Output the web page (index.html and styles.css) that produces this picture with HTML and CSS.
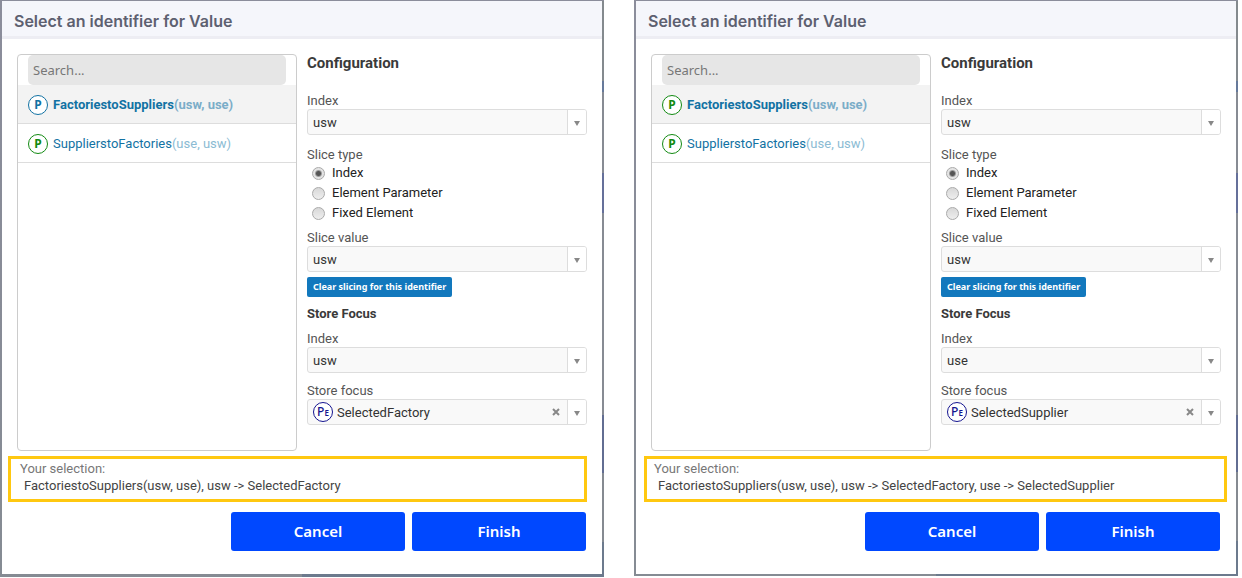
FILE: index.html
```html
<!DOCTYPE html>
<html lang="en">
<head>
<meta charset="utf-8">
<title>Select an identifier for Value</title>
<link rel="stylesheet" href="styles.css">
</head>
<body>
<main class="page">
  <section class="dialog dialog-factory" aria-labelledby="title-a">
    <header class="dialog-header"><h1 class="dialog-title" id="title-a">Select an identifier for Value</h1></header>
    <div class="dialog-body">
      <div class="picker">
        <input class="search" type="text" placeholder="Search..." aria-label="Search identifiers">
        <ul class="identifiers">
          <li class="identifier selected"><span class="badge badge-blue">P</span><a class="name" href="#a1">FactoriestoSuppliers<span class="indices">(usw, use)</span></a></li>
          <li class="identifier"><span class="badge badge-green">P</span><a class="name" href="#a2">SupplierstoFactories<span class="indices">(use, usw)</span></a></li>
        </ul>
      </div>
      <form class="config">
        <h2 class="config-title">Configuration</h2>
        <div class="field">
          <label class="label" for="index-a">Index</label>
          <div class="combo"><select class="combo-select" id="index-a"><option>usw</option></select><span class="combo-arrow"></span></div>
        </div>
        <fieldset class="slice">
          <legend class="label">Slice type</legend>
          <label class="choice"><input class="radio" type="radio" name="slice-a" checked>Index</label>
          <label class="choice"><input class="radio" type="radio" name="slice-a">Element Parameter</label>
          <label class="choice"><input class="radio" type="radio" name="slice-a">Fixed Element</label>
        </fieldset>
        <div class="field">
          <label class="label" for="value-a">Slice value</label>
          <div class="combo"><select class="combo-select" id="value-a"><option>usw</option></select><span class="combo-arrow"></span></div>
        </div>
        <button class="clear-slicing" type="button">Clear slicing for this identifier</button>
        <h3 class="focus-title">Store Focus</h3>
        <div class="field">
          <label class="label" for="focus-index-a">Index</label>
          <div class="combo"><select class="combo-select" id="focus-index-a"><option>usw</option></select><span class="combo-arrow"></span></div>
        </div>
        <div class="field focus-field">
          <label class="label" for="focus-a">Store focus</label>
          <div class="combo combo-tagged">
            <select class="combo-select" id="focus-a"><option>SelectedFactory</option></select>
            <span class="badge badge-element">P<small class="badge-sub">E</small></span>
            <button class="combo-clear" type="button" aria-label="Clear store focus"><svg class="cross" viewBox="0 0 8 8"><path d="M1 1l6 6M7 1l-6 6"/></svg></button>
            <span class="combo-arrow"></span>
          </div>
        </div>
      </form>
    </div>
    <div class="summary">
      <p class="summary-label">Your selection:</p>
      <p class="summary-value">FactoriestoSuppliers(usw, use), usw -&gt; SelectedFactory</p>
    </div>
    <footer class="actions"><button class="action" type="button">Cancel</button><button class="action" type="button">Finish</button></footer>
  </section>

  <section class="dialog dialog-supplier" aria-labelledby="title-b">
    <header class="dialog-header"><h1 class="dialog-title" id="title-b">Select an identifier for Value</h1></header>
    <div class="dialog-body">
      <div class="picker">
        <input class="search" type="text" placeholder="Search..." aria-label="Search identifiers">
        <ul class="identifiers">
          <li class="identifier selected"><span class="badge badge-green">P</span><a class="name" href="#b1">FactoriestoSuppliers<span class="indices">(usw, use)</span></a></li>
          <li class="identifier"><span class="badge badge-green">P</span><a class="name" href="#b2">SupplierstoFactories<span class="indices">(use, usw)</span></a></li>
        </ul>
      </div>
      <form class="config">
        <h2 class="config-title">Configuration</h2>
        <div class="field">
          <label class="label" for="index-b">Index</label>
          <div class="combo"><select class="combo-select" id="index-b"><option>usw</option></select><span class="combo-arrow"></span></div>
        </div>
        <fieldset class="slice">
          <legend class="label">Slice type</legend>
          <label class="choice"><input class="radio" type="radio" name="slice-b" checked>Index</label>
          <label class="choice"><input class="radio" type="radio" name="slice-b">Element Parameter</label>
          <label class="choice"><input class="radio" type="radio" name="slice-b">Fixed Element</label>
        </fieldset>
        <div class="field">
          <label class="label" for="value-b">Slice value</label>
          <div class="combo"><select class="combo-select" id="value-b"><option>usw</option></select><span class="combo-arrow"></span></div>
        </div>
        <button class="clear-slicing" type="button">Clear slicing for this identifier</button>
        <h3 class="focus-title">Store Focus</h3>
        <div class="field">
          <label class="label" for="focus-index-b">Index</label>
          <div class="combo"><select class="combo-select" id="focus-index-b"><option>use</option></select><span class="combo-arrow"></span></div>
        </div>
        <div class="field focus-field">
          <label class="label" for="focus-b">Store focus</label>
          <div class="combo combo-tagged">
            <select class="combo-select" id="focus-b"><option>SelectedSupplier</option></select>
            <span class="badge badge-element">P<small class="badge-sub">E</small></span>
            <button class="combo-clear" type="button" aria-label="Clear store focus"><svg class="cross" viewBox="0 0 8 8"><path d="M1 1l6 6M7 1l-6 6"/></svg></button>
            <span class="combo-arrow"></span>
          </div>
        </div>
      </form>
    </div>
    <div class="summary">
      <p class="summary-label">Your selection:</p>
      <p class="summary-value">FactoriestoSuppliers(usw, use), usw -&gt; SelectedFactory, use -&gt; SelectedSupplier</p>
    </div>
    <footer class="actions"><button class="action" type="button">Cancel</button><button class="action" type="button">Finish</button></footer>
  </section>
</main>
</body>
</html>
```
FILE: styles.css
```css
*, *::before, *::after { box-sizing: border-box; }

body {
  margin: 0;
  background: #fff;
  color: #3a3a3a;
  font: 13px/18px Roboto, sans-serif;
}

h1, h2, h3, p, ul { margin: 0; padding: 0; }

.page {
  display: flex;
  align-items: flex-start;
  gap: 30px;
  padding-right: 4px;
}

.dialog {
  flex: 1;
  min-width: 0;
  border: 2px solid transparent;
  border-top: 1px solid transparent;
  background:
    linear-gradient(#fff, #fff) padding-box,
    linear-gradient(#8b8d9b, #858b93) left / 50% 100% no-repeat border-box,
    linear-gradient(#8b8d9b 0 1px, #848a8e 1px 14%, #66799a 14% 16%, #878b93 16% 30%, #65709a 30% 37%, #878b93 37% 72%, #626d92 72% 82%, #858a91 82% 94%, #6c7a8d 94%) right / 50% 100% no-repeat border-box;
}
.dialog-factory { border-bottom-width: 3px; }

.dialog-header {
  padding: 11px 12px 6px;
  border-bottom: 3px solid #ededf3;
  background: #f5f6fb;
}
.dialog-title {
  color: #5d6070;
  font: 600 15px/18px Inter, sans-serif;
  font-size: 16px;
}

.dialog-body {
  display: grid;
  grid-template-columns: 1fr 1fr;
  gap: 10px;
  padding: 15px 15px 5px;
}

.picker {
  min-height: 397px;
  border: 1px solid #ccc;
  border-radius: 4px;
}
.search {
  display: block;
  width: calc(100% - 20px);
  height: 30px;
  margin: 0 10px;
  padding: 0 5px;
  border: 0;
  border-radius: 5px;
  background: #e6e6e6;
  font: 13px "Noto Sans", sans-serif;
}
.search::placeholder { color: #777; }

.identifiers { list-style: none; }
.identifier {
  display: flex;
  align-items: center;
  gap: 5px;
  height: 39px;
  padding: 1px 0 0 10px;
  border-bottom: 1px solid #ddd;
}
.selected { background: #f3f3f3; font-weight: 700; }
.name { padding-top: 1px; color: #1272a3; text-decoration: none; }
.indices { color: #8bbbd3; }
.selected .indices { color: #7badc8; }

.badge {
  display: flex;
  align-items: center;
  justify-content: center;
  width: 20px;
  height: 20px;
  border: 1px solid;
  border-radius: 50%;
  background: #fff;
  font: 700 12px/18px "Noto Sans", sans-serif;
}
.badge-blue { color: #1272a3; }
.badge-green { color: #128a12; }
.badge-element { color: #14148f; font-weight: 500; }
.badge-sub { padding-top: 2px; font-size: 8px; font-weight: 600; }

.config-title { margin-bottom: 19px; font-size: 15px; font-weight: 700; line-height: 18px; }
.label { display: block; padding: 2px 0 0; color: #555; line-height: 16px; }

.combo {
  display: grid;
  grid-template-columns: 25px 1fr 22px 19px;
  align-items: center;
  height: 26px;
  border: 1px solid #ddd;
  border-radius: 3px;
  background: #f9f9f9;
}
.combo > * { grid-row: 1; }
.combo-select {
  grid-column: 1 / -1;
  height: 24px;
  padding: 2px 40px 0 5px;
  border: 0;
  background: none;
  appearance: none;
  color: #333;
  font: inherit;
}
.combo-tagged .combo-select { padding-left: 29px; }
.combo .badge { grid-column: 1; margin-left: 5px; }
.combo-clear {
  grid-column: 3;
  display: flex;
  justify-content: center;
  padding: 0;
  border: 0;
  background: none;
}
.cross { width: 8px; height: 8px; fill: none; stroke: #888; stroke-width: 2; }
.combo-arrow {
  grid-column: 4;
  display: flex;
  align-items: center;
  justify-content: center;
  height: 24px;
  padding: 3px 1px 0 0;
  border-left: 1px solid #ddd;
  border-radius: 0 2px 2px 0;
  background: #fff;
  pointer-events: none;
}
.combo-arrow::after {
  border: 3px solid transparent;
  border-top: 5px solid #888;
  border-bottom: 0;
  content: "";
}

.slice { margin: 10px 0 5px; padding: 0; border: 0; }
.choice { display: flex; align-items: center; gap: 7px; height: 20px; padding-left: 5px; color: #222; }
.radio {
  width: 13px;
  height: 13px;
  margin: 0;
  border: 1px solid #aaa;
  border-radius: 50%;
  background: linear-gradient(#d8d8d8, #eee);
  appearance: none;
}
.radio:checked { background: radial-gradient(circle, #555 0 2px, #e4e4e4 4px); }

.clear-slicing {
  display: block;
  height: 20px;
  margin: 5px 0 7px;
  padding: 0 6px;
  border: 0;
  border-radius: 2px;
  background: #1278bd;
  color: #fff;
  font: 700 9px/20px "Noto Sans", sans-serif;
}
.focus-title { margin-bottom: 7px; padding-top: 2px; font-size: 13px; font-weight: 700; line-height: 16px; }
.focus-field { margin-top: 8px; }

.summary {
  margin: 0 15px 0 6px;
  padding: 1px 9px 5px;
  border: 3px solid #ffc810;
}
.summary-label { color: #777; line-height: 17px; }
.summary-value { padding-left: 4px; color: #444; line-height: 17px; }
.dialog-supplier .summary { margin: 0 9px 0 8px; padding-left: 7px; }

.actions {
  display: flex;
  justify-content: flex-end;
  gap: 7px;
  padding: 10px 16px 23px;
}
.action {
  width: 174px;
  height: 39px;
  padding: 0 0 2px;
  border: 0;
  border-radius: 3px;
  background: #0048ff;
  color: #fff;
  font: 600 15px "Noto Sans", sans-serif;
}
```
